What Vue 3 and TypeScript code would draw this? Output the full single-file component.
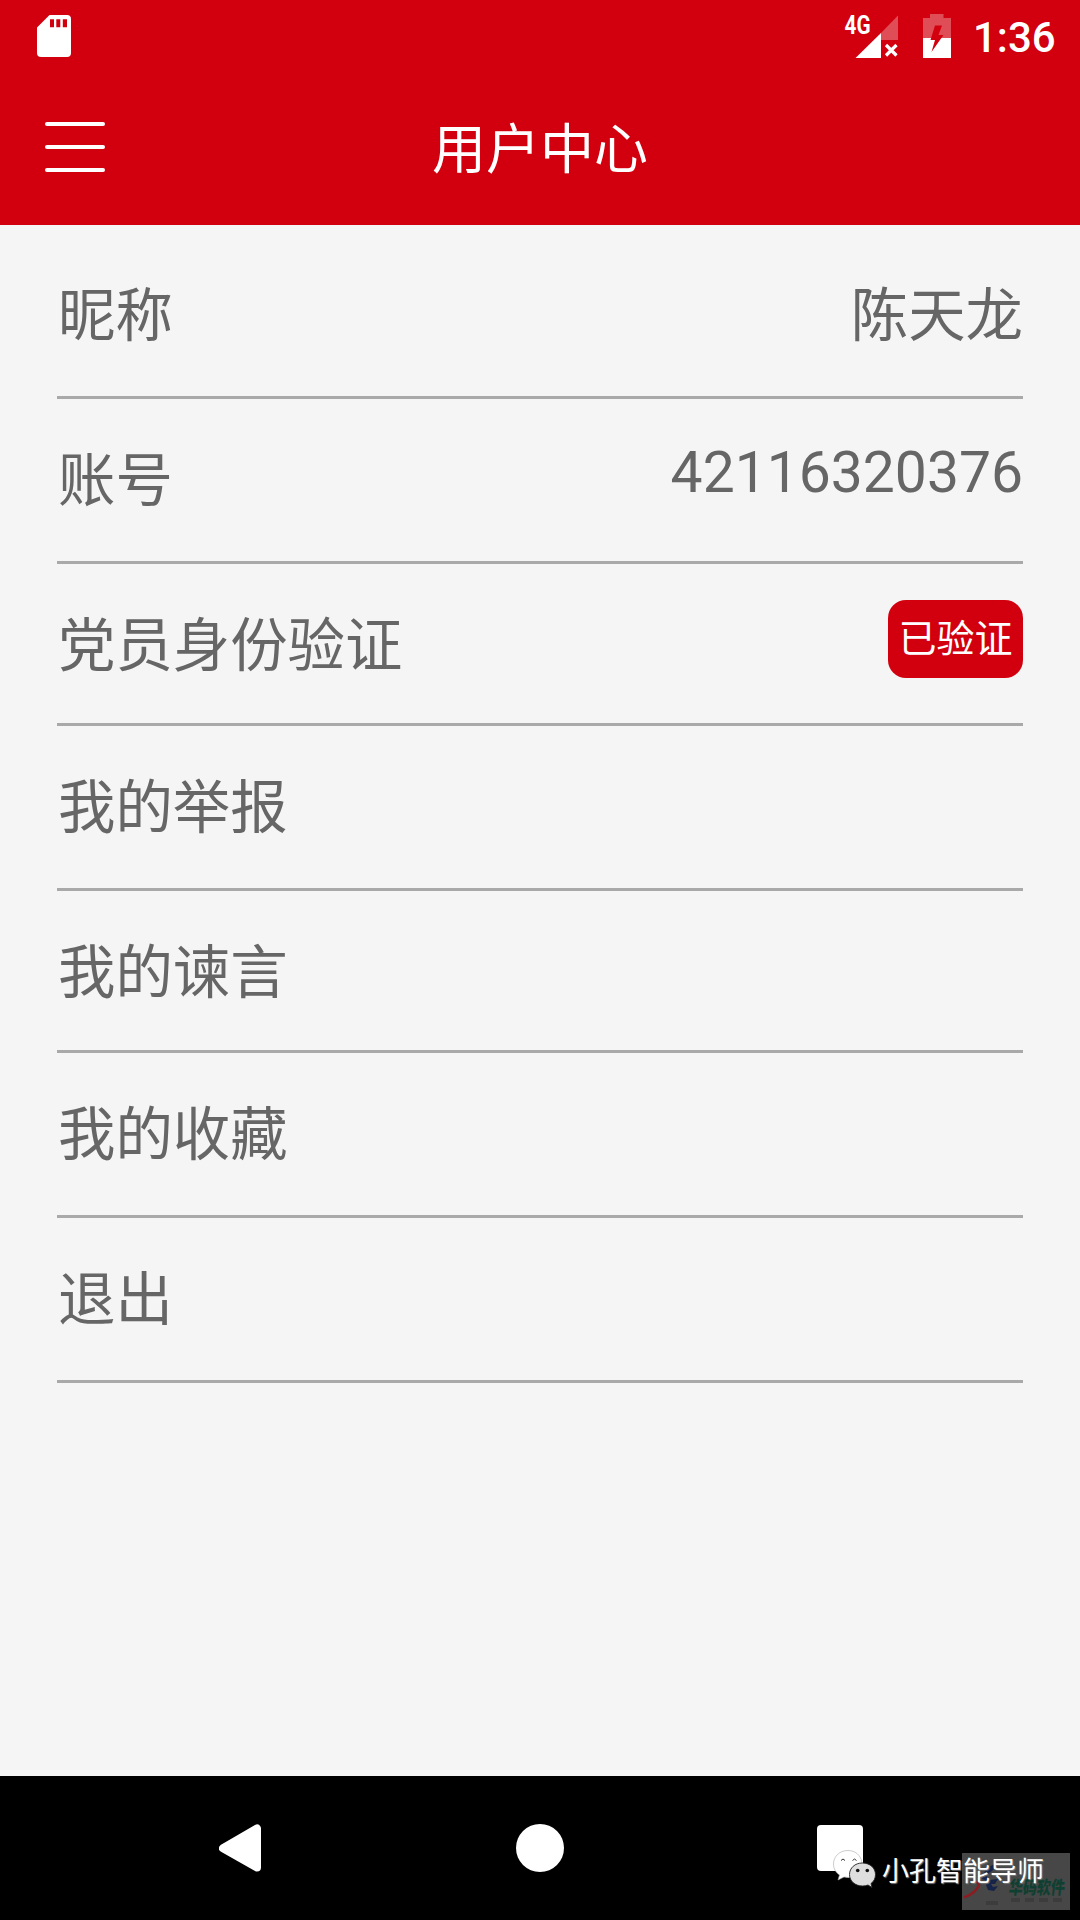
<script setup lang="ts">
interface Row {
  label: string
  height: number
  value?: string
  numeric?: boolean
  badge?: string
}

const rows: Row[] = [
  { label: '昵称', height: 165, value: '陈天龙' },
  { label: '账号', height: 165, value: '42116320376', numeric: true },
  { label: '党员身份验证', height: 162, badge: '已验证' },
  { label: '我的举报', height: 165 },
  { label: '我的谏言', height: 162 },
  { label: '我的收藏', height: 165 },
  { label: '退出', height: 165 },
]
</script>

<template>
  <div class="screen">
    <header class="top">
      <div class="status">
        <svg class="sd" width="34" height="42" viewBox="0 0 34 42">
          <path fill="#fff" fill-rule="evenodd" d="M12.5 0H30a4 4 0 0 1 4 4V38a4 4 0 0 1-4 4H4a4 4 0 0 1-4-4V12.500ZM13 4.200V12.300H17V4.200ZM19.300 4.200V12.300H23.300V4.200ZM25.800 4.200V12.300H30V4.200Z" />
        </svg>
        <div class="status-right">
          <svg class="signal" width="56" height="48" viewBox="844 12 56 48">
            <text class="net" x="844.500" y="33.500" textLength="26" lengthAdjust="spacingAndGlyphs">4G</text>
            <path fill="#fff" fill-opacity=".3" d="M881 33 898 15.500V40H881Z" />
            <path fill="#fff" d="M855.500 58H881V33Z" />
            <path stroke="#fff" stroke-width="3.200" d="M886 45 896.500 55.500M896.500 45 886 55.500" />
          </svg>
          <svg class="battery" width="28" height="44" viewBox="0 0 28 44">
            <path fill="#fff" fill-opacity=".3" d="M7 0H20.500V4H28V24H0V4H7Z" />
            <path fill="#fff" d="M0 24H28V44H0Z" />
            <path fill="#d2000f" d="M12 11.500H19L15.500 21H20.500L8.500 38 12 26H7.500Z" />
          </svg>
          <span class="clock">1:36</span>
        </div>
      </div>
      <div class="bar">
        <button class="menu" aria-label="menu"><i></i><i></i><i></i></button>
        <h1 class="title">用户中心</h1>
      </div>
    </header>

    <main class="list">
      <div v-for="row in rows" :key="row.label" class="row" :style="{ height: row.height + 'px' }">
        <span class="label">{{ row.label }}</span>
        <span v-if="row.value" class="value" :class="{ numeric: row.numeric }">{{ row.value }}</span>
        <span v-if="row.badge" class="badge">{{ row.badge }}</span>
      </div>
    </main>

    <nav class="nav">
      <svg width="42" height="48" viewBox="0 0 42 48">
        <path fill="#fff" stroke="#fff" stroke-width="8" stroke-linejoin="round" d="M4 24.300 38 4.500V43.500Z" />
      </svg>
      <span class="home"></span>
      <span class="recent"></span>

      <div class="brand">
        <svg class="brand-mark" width="108" height="57" viewBox="0 0 108 57">
          <path fill="#17244a" d="M24 15 33 11 31 17 27 20 25 24 28 27 36 26 33 31 29 31 31 34 36 33 32 38 26 37 24 32 26 28 20 26Z" />
          <path fill="none" stroke="#8b1d20" stroke-width="2.500" stroke-linecap="round" d="M3 44Q14 40 17 32 15 28 12 29" />
          <path fill="none" stroke="#3c3c3c" stroke-width="4" d="M24 50H36M49 47H58M63 47H72M77 47H86M91 47H100" />
        </svg>
        <span class="brand-name">华码软件</span>
      </div>
      <div class="watermark">
        <svg width="44" height="40" viewBox="833 1849 44 40">
          <path fill="#fff" stroke="#aaa" stroke-width=".6" d="M848 1850.500C839.500 1850.500 833.500 1856.500 833.500 1864 833.500 1869 836 1872.500 839.500 1875L838 1880 844 1877Q851 1879 856 1875C860 1872 862 1868 862 1863 861 1855 855 1850.500 848 1850.500Z" />
          <path fill="none" stroke="#333" stroke-width="1" d="M841 1860.500Q843 1857.500 845 1860.500M852.500 1860.500Q854.500 1857.500 856.500 1860.500" />
          <path fill="#dedede" stroke="#222" stroke-width=".9" d="M862.300 1863C855 1863 849.500 1868 849.500 1874.500S855 1886 862.500 1886Q865.500 1886 868 1885L872 1887.500 871 1883.500C874 1881.500 875.500 1878 875.500 1874.500 875.500 1868 870 1863 862.300 1863Z" />
          <circle cx="857.700" cy="1870.500" r="1.800" fill="#111" />
          <circle cx="867.300" cy="1870.500" r="1.800" fill="#111" />
        </svg>
        <span class="watermark-text">小孔智能导师</span>
      </div>
    </nav>
  </div>
</template>

<style>
body {
  margin: 0;
}
</style>

<style scoped>
.screen {
  display: flex;
  flex-direction: column;
  width: 1080px;
  height: 1920px;
  overflow: hidden;
  background: #f5f5f5;
  color: #666;
  font-family: 'Noto Sans CJK SC', sans-serif;
}

.top {
  height: 225px;
  flex: none;
  background: #d2000f;
  color: #fff;
}

.status {
  display: flex;
  justify-content: space-between;
  align-items: flex-start;
  height: 72px;
  padding: 0 25px 0 37px;
}

.sd {
  margin-top: 15px;
}

.status-right {
  display: flex;
  align-items: flex-start;
}

.signal {
  margin-top: 12px;
}

.net {
  fill: #fff;
  font: 700 25px Roboto, sans-serif;
}

.battery {
  margin: 14px 22px 0 23px;
}

.clock {
  width: 82px;
  font: 500 42px/75px Roboto, sans-serif;
  white-space: nowrap;
}

.bar {
  display: grid;
  grid-template-columns: 1fr auto 1fr;
  height: 153px;
}

.menu {
  display: flex;
  flex-direction: column;
  gap: 19px;
  width: 60px;
  margin: 50px 0 0 45px;
  padding: 0;
  border: 0;
  background: none;
  align-self: start;
}

.menu i {
  height: 4px;
  border-radius: 2px;
  background: #fff;
}

.title {
  margin: 0;
  font-size: 54px;
  font-weight: 400;
  line-height: 148px;
}

.list {
  flex: 1;
  padding: 9px 57px 0;
}

.row {
  display: flex;
  justify-content: space-between;
  align-items: flex-start;
  box-sizing: border-box;
  border-bottom: 3px solid #a9a9a9;
  font-size: 57.4px;
}

.label,
.value {
  line-height: 155px;
}

.label {
  padding-left: 1px;
}

.value.numeric {
  font-family: Roboto, sans-serif;
  font-size: 57px;
  line-height: 147px;
}

.badge {
  width: 135px;
  height: 78px;
  margin-top: 36px;
  border-radius: 18px;
  background: #d2000f;
  color: #fff;
  font-size: 38px;
  line-height: 72px;
  text-align: center;
}

.nav {
  position: relative;
  display: flex;
  align-items: center;
  justify-content: space-between;
  box-sizing: border-box;
  height: 144px;
  padding: 0 217px 0 219px;
  background: #000;
}

.home {
  width: 48px;
  height: 48px;
  margin-left: 2px;
  border-radius: 50%;
  background: #fff;
}

.recent {
  width: 46px;
  height: 46px;
  border-radius: 4px;
  background: #fff;
}

.brand {
  position: absolute;
  left: 962px;
  top: 77px;
  width: 108px;
  height: 57px;
  background: #474747;
}

.brand-mark {
  display: block;
}

.brand-name {
  position: absolute;
  left: 47px;
  top: 23px;
  color: #0f3f31;
  font-size: 14px;
  font-weight: 900;
  line-height: 20px;
  transform: scaleY(1.3) skewX(-8deg);
  white-space: nowrap;
}

.watermark {
  position: absolute;
  left: 833px;
  top: 73px;
  display: flex;
  align-items: flex-start;
  gap: 5px;
}

.watermark-text {
  color: #fff;
  font-size: 27px;
  line-height: 42px;
  white-space: nowrap;
  text-shadow: 1px 1px 1px #777;
}
</style>
